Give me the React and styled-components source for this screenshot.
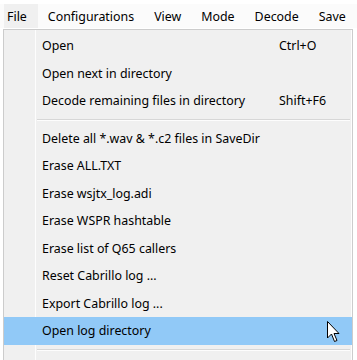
import React from "react";
import styled, { createGlobalStyle } from "styled-components";

const Global = createGlobalStyle`
  html, body {
    margin: 0;
    padding: 0;
    background: #ffffff;
    height: 360px;
    overflow: hidden;
  }
  body {
    font-family: "Noto Sans", "Liberation Sans", sans-serif;
    font-size: 12.4px;
    color: #000000;
  }
`;

const Page = styled.div`
  position: relative;
  width: 357px;
  height: 360px;
  padding-top: 4px;
  box-sizing: border-box;
`;

const MenuBar = styled.div`
  display: flex;
  height: 24px;
  padding-left: 4px;
  background: #fbfbfb;
`;

const BarItem = styled.div`
  display: flex;
  align-items: center;
  padding: 0 ${(p) => (p.$first ? "11px" : "10px")} 0 ${(p) => (p.$first ? "3px" : "10px")};
  background: ${(p) => (p.$open ? "#f0f0f0" : "transparent")};
  white-space: nowrap;
`;

const Dropdown = styled.div`
  margin: 1px 0 0 3px;
  width: 350px;
  height: 340px;
  border: 1px solid #cccccc;
  border-bottom: none;
  box-sizing: border-box;
  background: linear-gradient(
    to right,
    #f0f0f0 31px,
    #fdfdfd 31px,
    #fdfdfd 32px,
    #f0f0f0 32px
  );
  box-shadow: inset -1px 0 #fdfdfd;
  padding-top: 2px;
`;

const Row = styled.div`
  display: grid;
  grid-template-columns: 237px 1fr;
  align-items: center;
  height: 27.5px;
  padding-left: 38px;
  background: ${(p) => (p.$hover ? "#91c9f7" : "transparent")};
  white-space: nowrap;
`;

const Separator = styled.div`
  height: 10px;
  display: flex;
  align-items: center;
  padding-left: 33px;
  padding-right: 2px;

  &::after {
    content: "";
    flex: 1;
    height: 1px;
    background: #d7d7d7;
    box-shadow: 0 1px #fdfdfd;
  }
`;

const Cursor = styled.svg`
  position: absolute;
  left: 327px;
  top: 321px;
`;

const items = [
  ["Open", "Ctrl+O"],
  ["Open next in directory"],
  ["Decode remaining files in directory", "Shift+F6"],
  "sep",
  ["Delete all *.wav & *.c2 files in SaveDir"],
  ["Erase ALL.TXT"],
  ["Erase wsjtx_log.adi"],
  ["Erase WSPR hashtable"],
  ["Erase list of Q65 callers"],
  ["Reset Cabrillo log ..."],
  ["Export Cabrillo log ..."],
  ["Open log directory", null, true],
  "sep",
];

const menus = ["File", "Configurations", "View", "Mode", "Decode", "Save"];

export default function App() {
  return (
    <Page>
      <Global />
      <MenuBar>
        {menus.map((m, i) => (
          <BarItem key={m} $first={i === 0} $open={i === 0}>
            {m}
          </BarItem>
        ))}
      </MenuBar>
      <Dropdown>
        {items.map((it, i) =>
          it === "sep" ? (
            <Separator key={i} />
          ) : (
            <Row key={i} $hover={it[2]}>
              <span>{it[0]}</span>
              <span>{it[1] || ""}</span>
            </Row>
          )
        )}
      </Dropdown>
      <Cursor width="13" height="22" viewBox="0 0 13 22">
        <path
          d="M0.5 0.5 L0.5 17 L4.5 13 L7.5 20.5 L10 19.5 L7 12.5 L12 12.5 Z"
          fill="#ffffff"
          stroke="#000000"
          strokeWidth="1"
          strokeLinejoin="miter"
        />
      </Cursor>
    </Page>
  );
}
